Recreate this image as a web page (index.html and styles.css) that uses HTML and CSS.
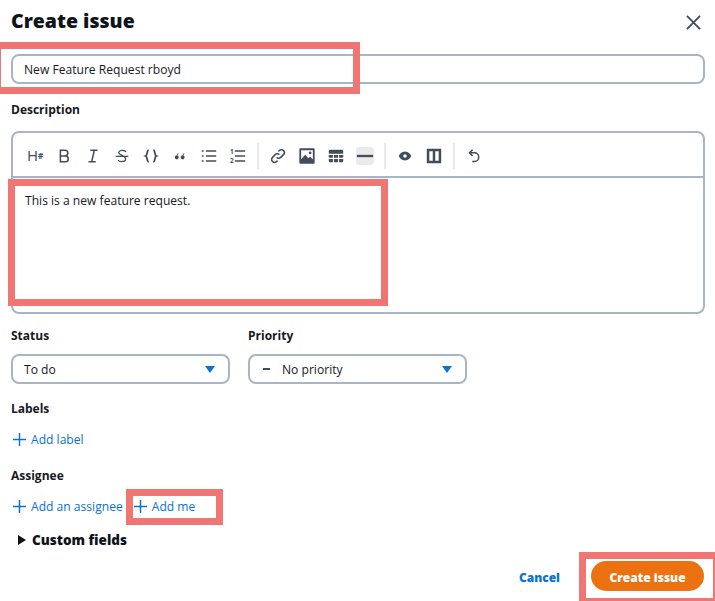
FILE: index.html
```html
<!DOCTYPE html>
<html lang="en">
<head>
<meta charset="utf-8">
<title>Create issue</title>
<link rel="stylesheet" href="styles.css">
</head>
<body>
<main class="dialog">
  <header class="head">
    <h1>Create issue</h1>
    <svg class="close" viewBox="0 0 16 16"><path d="M1 1l14 14M15 1L1 15"/></svg>
  </header>
  <div class="input title-input">New Feature Request rboyd</div>
  <div class="label desc-label">Description</div>
  <section class="editor">
    <div class="toolbar">
      <span class="ic-h">H<span class="ic-hash">#</span></span>
      <svg class="ic" viewBox="0 0 20 20"><path d="M6 3.500h5a3.200 3.200 0 0 1 0 6.500H6zM6 10h6a3.300 3.300 0 0 1 0 6.500H6z"/></svg>
      <svg class="ic" viewBox="0 0 20 20"><path d="M7 3.500h8M5 16.500h8M11.500 3.500l-3 13"/></svg>
      <svg class="ic" viewBox="0 0 20 20"><path class="thin" d="M3 10.500h14M14.500 5.500C13.500 3.800 8 2.800 6.500 5.500c-1.500 3 7.500 4 7.500 8 0 3.300-6.500 3.300-8.500 1"/></svg>
      <svg class="ic" viewBox="0 0 20 20"><path class="bold" d="M7.500 3.500C5 3.500 6.500 9 4 10c2.500 1 1 6.500 3.500 6.500M12.500 3.500C15 3.500 13.500 9 16 10c-2.500 1-1 6.500-3.500 6.500"/></svg>
      <svg class="ic" viewBox="0 0 20 20"><path class="fill" d="M6 13.500a2.200 2.200 0 1 1 2.600-2.100c0 .9-.4 1.600-1.100 2.100zM12.500 13.500a2.200 2.200 0 1 1 2.600-2.100c0 .9-.4 1.600-1.100 2.100zM6.500 8l1.500-1.200.4.700-1.700 2zM13 8l1.500-1.200.4.700-1.700 2z"/></svg>
      <svg class="ic" viewBox="0 0 20 20"><path d="M6.500 4.500H18M6.500 10H18M6.500 15.500H18M2 4.500h2M2 10h2M2 15.500h2"/></svg>
      <svg class="ic" viewBox="0 0 20 20"><path d="M6.500 4.500H18M6.500 10H18M6.500 15.500H18"/><text x="1" y="8" class="num">1</text><text x="1" y="18" class="num">2</text></svg>
      <span class="sep"></span>
      <svg class="ic" viewBox="0 0 20 20"><path d="M8.500 11.500a3.200 3.200 0 0 0 4.600 0l3-3a3.200 3.200 0 0 0-4.600-4.600l-1 1M11.500 8.500a3.200 3.200 0 0 0-4.600 0l-3 3a3.200 3.200 0 0 0 4.600 4.600l1-1"/></svg>
      <svg class="ic" viewBox="0 0 20 20"><path class="fill" fill-rule="evenodd" d="M2.500 1.500h15a1 1 0 0 1 1 1v15a1 1 0 0 1-1 1h-15a1 1 0 0 1-1-1v-15a1 1 0 0 1 1-1zM3.500 3.500v10l4.500-5 3.500 4 2-2 3 3.500V3.500zM13.500 5a1.500 1.500 0 1 1 0 3 1.500 1.500 0 0 1 0-3z"/></svg>
      <svg class="ic" viewBox="0 0 20 20"><path class="fill" d="M3.500 3h13A1.500 1.500 0 0 1 18 4.500v3H2v-3A1.500 1.500 0 0 1 3.500 3zM2 9h4.500v3H2zM7.700 9h4.600v3H7.700zM13.500 9H18v3h-4.500zM2 13.300h4.500V17h-3A1.500 1.500 0 0 1 2 15.500zM7.700 13.300h4.600V17H7.700zM13.500 13.300H18v2.200a1.500 1.500 0 0 1-1.500 1.500h-3z"/></svg>
      <span class="ic-active"><svg class="ic" viewBox="0 0 20 20"><path class="thick" d="M1 10h18"/></svg></span>
      <span class="sep"></span>
      <svg class="ic" viewBox="0 0 20 20"><path class="fill" fill-rule="evenodd" d="M10 5c3.700 0 6 2.600 7 5-1 2.400-3.300 5-7 5s-6-2.600-7-5c1-2.400 3.300-5 7-5zM10 8a2 2 0 1 0 0 4 2 2 0 0 0 0-4z"/></svg>
      <svg class="ic" viewBox="0 0 20 20"><path class="fill" fill-rule="evenodd" d="M2 2h16v16H2zM4.800 4.800v10.400h3.800V4.800zM11.400 4.800v10.400h3.800V4.800z"/></svg>
      <span class="sep"></span>
      <svg class="ic" viewBox="0 0 20 20"><path d="M8.500 3L5 6.500 8.500 10M5 6.500h5.500a4.500 4.500 0 0 1 0 9.500H8"/></svg>
    </div>
    <div class="editor-body">This is a new feature request.</div>
  </section>
  <div class="fields">
    <div class="field">
      <div class="label">Status</div>
      <div class="input select"><span>To do</span><span class="caret"></span></div>
    </div>
    <div class="field">
      <div class="label">Priority</div>
      <div class="input select"><span class="prio"><span class="dash"></span>No priority</span><span class="caret"></span></div>
    </div>
  </div>
  <div class="label labels-label">Labels</div>
  <div class="links"><a class="link"><svg class="plus" viewBox="0 0 14 14"><path d="M7 0v14M0 7h14"/></svg>Add label</a></div>
  <div class="label assignee-label">Assignee</div>
  <div class="links assign-links">
    <a class="link"><svg class="plus" viewBox="0 0 14 14"><path d="M7 0v14M0 7h14"/></svg>Add an assignee</a>
    <a class="link"><svg class="plus" viewBox="0 0 14 14"><path d="M7 0v14M0 7h14"/></svg>Add me</a>
  </div>
  <div class="custom"><span class="tri"></span>Custom fields</div>
  <footer class="foot">
    <a class="cancel">Cancel</a>
    <a class="primary">Create issue</a>
  </footer>
</main>
<div class="mark m1"></div>
<div class="mark m2"></div>
<div class="mark m3"></div>
<div class="mark m4"></div>
</body>
</html>
```
FILE: styles.css
```css
* { box-sizing: border-box; }
html, body { margin: 0; padding: 0; background: #fff; }
body {
  width: 715px;
  height: 601px;
  overflow: hidden;
  position: relative;
  font-family: "Open Sans", "Noto Sans", sans-serif;
  font-size: 12.1px;
  color: #16191f;
}
.dialog { padding: 0 10px 0 11px; }
.head { display: flex; justify-content: space-between; align-items: center; height: 42px; }
h1 { margin: 0; font-size: 19.5px; line-height: 42px; font-weight: 800; color: #0f141a; }
.close { width: 15px; height: 15px; margin: 2px 4px 0 0; fill: none; stroke: #414d5c; stroke-width: 2; }
.input {
  height: 30px;
  border: 2px solid #a9b5c5;
  border-radius: 8px;
  background: #fff;
  display: flex;
  align-items: center;
  padding: 0 11px;
}
.title-input { margin-top: 12px; }
.label { font-weight: 700; font-size: 12px; line-height: 18px; color: #16191f; }
.desc-label { margin-top: 17px; }
.editor { margin-top: 12px; height: 183px; border: 2px solid #a9b5c5; border-radius: 8px; display: flex; flex-direction: column; }
.toolbar { height: 45px; flex: none; border-bottom: 2px solid #a9b5c5; display: flex; align-items: center; padding: 2px 0 0 13px; gap: 11px; }
.ic { width: 18px; height: 18px; flex: none; fill: none; stroke: #414d5c; stroke-width: 1.7; }
.ic .fill { fill: #414d5c; stroke: none; }
.ic .thick { stroke-width: 2.6; }
.ic .thin { stroke-width: 1.4; }
.ic .bold { stroke-width: 2; }
.ic text { fill: #414d5c; stroke: none; font-family: "Open Sans", sans-serif; }
.ic .num { font-size: 7px; font-weight: 700; }
.ic-h { width: 18px; flex: none; display: flex; align-items: flex-start; justify-content: center; color: #414d5c; font-size: 15px; line-height: 18px; }
.ic-hash { font-size: 8px; font-weight: 700; line-height: 18px; margin-top: 1px; }
.ic-active { width: 18px; height: 18px; flex: none; background: #e9ebed; border-radius: 3px; display: flex; }
.sep { width: 2px; height: 26px; background: #e9ebed; flex: none; margin: 0 -1px; }
.editor-body { padding: 14px 12px; line-height: 18px; }
.fields { display: flex; gap: 18px; margin-top: 13px; }
.field { width: 219px; }
.field .input { margin-top: 9px; }
.select { justify-content: space-between; padding-right: 13px; }
.prio { display: flex; align-items: center; }
.dash { width: 7px; height: 2px; background: #414d5c; margin: 0 12px 0 2px; }
.caret { width: 0; height: 0; border-left: 5.5px solid transparent; border-right: 5.5px solid transparent; border-top: 7px solid #0972d3; }
.labels-label { margin-top: 16px; }
.links { display: flex; gap: 4px; height: 20px; align-items: center; margin-top: 11px; }
.link { display: flex; align-items: center; color: #0972d3; font-size: 12.1px; }
.plus { width: 13px; height: 13px; margin: 0 5px 0 2px; fill: none; stroke: #0972d3; stroke-width: 1.6; }
.assignee-label { margin-top: 18px; }
.assign-links { margin-top: 11px; gap: 9px; }
.custom { display: flex; align-items: center; margin-top: 15px; padding-left: 7px; font-weight: 800; font-size: 13.5px; line-height: 18px; color: #0f141a; }
.tri { width: 0; height: 0; border-top: 5px solid transparent; border-bottom: 5px solid transparent; border-left: 8px solid #0f141a; margin-right: 6px; }
.foot { display: flex; justify-content: flex-end; align-items: center; gap: 31px; margin-top: 12px; padding-right: 1px; }
.cancel { color: #0972d3; font-weight: 800; font-size: 12px; padding-top: 2px; }
.primary { width: 113px; height: 30px; padding-top: 2px; border-radius: 15px; background: #ec7211; color: #fff; font-weight: 800; font-size: 12px; display: flex; align-items: center; justify-content: center; }
.mark { position: absolute; border: 7px solid #ef7673; }
.m1 { left: -6px; top: 42px; width: 366px; height: 52px; }
.m2 { left: 8px; top: 179px; width: 380px; height: 127px; }
.m3 { left: 126px; top: 489px; width: 97px; height: 36px; }
.m4 { left: 579px; top: 552px; width: 136px; height: 49px; border-width: 7px 2px 3px 7px; }
```
